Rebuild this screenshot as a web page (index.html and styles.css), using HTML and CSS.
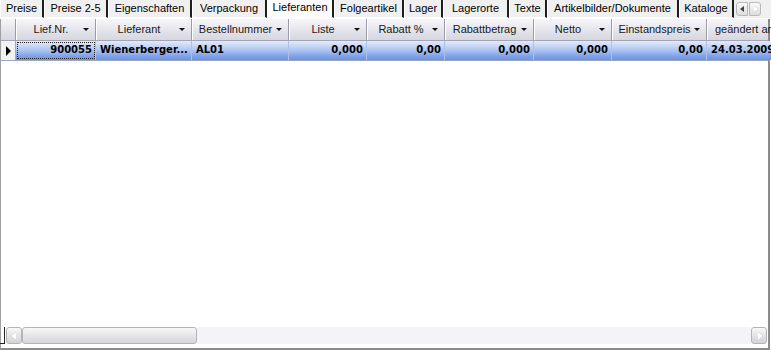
FILE: index.html
```html
<!DOCTYPE HTML>
<html lang=de>
  <head>
    <title>Artikel - Lieferanten</title>
    <meta name=viewport content=width=device-width,initial-scale=1>
    <link rel="stylesheet" href="styles.css">
  </head>
  <body>
    <div class=window>
      <div class=tabs>
        <div class=tab>Preise</div>
        <div class=tab>Preise 2-5</div>
        <div class=tab>Eigenschaften</div>
        <div class=tab>Verpackung</div>
        <div class="tab active">Lieferanten</div>
        <div class=tab>Folgeartikel</div>
        <div class=tab>Lager</div>
        <div class=tab>Lagerorte</div>
        <div class=tab>Texte</div>
        <div class=tab>Artikelbilder/Dokumente</div>
        <div class=tab>Kataloge</div>
        <div class=tabScroll>
          <span class="btn left"></span>
          <span class="btn right"></span>
        </div>
      </div>

      <div class=grid>
        <div class="cols head">
          <div class=ind></div>
          <div class=hcell>Lief.Nr.</div>
          <div class=hcell>Lieferant</div>
          <div class=hcell>Bestellnummer</div>
          <div class=hcell>Liste</div>
          <div class=hcell>Rabatt %</div>
          <div class=hcell>Rabattbetrag</div>
          <div class=hcell>Netto</div>
          <div class=hcell>Einstandspreis</div>
          <div class=hcell>geändert am</div>
        </div>
        <div class="cols row selected">
          <div class=ind><span class=pointer></span></div>
          <div class="cell num focus">900055</div>
          <div class=cell>Wienerberger...</div>
          <div class=cell>AL01</div>
          <div class="cell num">0,000</div>
          <div class="cell num">0,00</div>
          <div class="cell num">0,000</div>
          <div class="cell num">0,000</div>
          <div class="cell num">0,00</div>
          <div class=cell>24.03.2009</div>
        </div>
        <div class=empty></div>
        <div class=hscroll>
          <span class=corner></span>
          <span class="sbtn left"></span>
          <span class=thumb></span>
          <span class=track></span>
          <span class="sbtn right"></span>
        </div>
      </div>
    </div>
  </body>
</html>
```

FILE: styles.css
```css
html, body {
  margin: 0;
  background: #fff;
}
.window {
  width: 771px;
  height: 351px;
  overflow: hidden;
  font-family: "Liberation Sans", Arial, sans-serif;
  font-size: 11px;
  color: #000;
  display: flex;
  flex-direction: column;
}

/* tabs */
.tabs {
  display: flex;
  height: 18px;
  flex: none;
  background: #f0f0f0;
}
.tab {
  box-sizing: border-box;
  height: 18px;
  line-height: 16px;
  text-align: center;
  white-space: nowrap;
  background: #f0f0f0;
  border-left: 1px solid #fff;
  border-right: 2px solid #1e1e1e;
  border-bottom: 1px solid #fff;
  flex: none;
}
.tab:nth-child(1) { width: 44px; }
.tab:nth-child(2) { width: 64px; }
.tab:nth-child(3) { width: 84px; }
.tab:nth-child(4) { width: 75px; }
.tab:nth-child(5) { width: 67px; }
.tab:nth-child(6) { width: 70px; }
.tab:nth-child(7) { width: 39px; }
.tab:nth-child(8) { width: 66px; }
.tab:nth-child(9) { width: 38px; }
.tab:nth-child(10) { width: 132px; }
.tab:nth-child(11) { width: 55px; }
.tab.active {
  background: #fcfcfc;
  border-bottom-color: #fcfcfc;
  line-height: 14px;
}
.tabScroll {
  display: flex;
  gap: 1px;
  padding: 2px 0 0 2px;
}
.btn {
  box-sizing: border-box;
  width: 12px;
  height: 14px;
  border: 1px solid #b8b8b8;
  background: linear-gradient(#fafafa, #dcdcdc);
  position: relative;
}
.btn.left { border-radius: 3px 0 0 3px; }
.btn.right { border-radius: 0 3px 3px 0; }
.btn::after {
  content: "";
  position: absolute;
  top: 3px;
  border-top: 3px solid transparent;
  border-bottom: 3px solid transparent;
}
.btn.left::after {
  left: 3px;
  border-right: 4px solid #404040;
}
.btn.right::after {
  left: 4px;
  border-left: 4px solid #fff;
  filter: drop-shadow(0 0 0.5px #999);
}

/* grid */
.grid {
  flex: 1;
  display: flex;
  flex-direction: column;
  border-left: 1px solid #a0a0a0;
  border-right: 2px solid #8c8c8c;
  border-bottom: 2px solid #8c8c8c;
  margin-bottom: 1px;
  margin-top: 1px;
  width: 770px;
  box-sizing: border-box;
}
.cols {
  display: grid;
  grid-template-columns: 15px 80px 96px 97px 78px 78px 89px 78px 95px 90px;
  flex: none;
}
.head {
  height: 21px;
  background: linear-gradient(#f6f6fa, #e2e2ea 60%, #d6d6e0);
  border-bottom: 1px solid #a4a4b4;
}
.head .ind {
  border-right: 1px solid #9a9aa8;
}
.hcell {
  position: relative;
  line-height: 20px;
  text-align: center;
  padding-right: 10px;
  white-space: nowrap;
  overflow: hidden;
  color: #1a1a1a;
  border-left: 1px solid #fff;
  border-right: 1px solid #9a9aa8;
}
.hcell::after {
  content: "";
  position: absolute;
  right: 6px;
  top: 9px;
  border-left: 3px solid transparent;
  border-right: 3px solid transparent;
  border-top: 3px solid #111;
}
.hcell:last-child::after {
  display: none;
}
.hcell:last-child {
  text-align: left;
  padding-left: 7px;
}

.row {
  height: 19px;
  border-bottom: 1px solid #9aa6c4;
}
.row .ind {
  background: #f2f2f2;
  border-right: 1px solid #a8a8b0;
  position: relative;
}
.pointer {
  position: absolute;
  left: 5px;
  top: 5px;
  border-top: 5px solid transparent;
  border-bottom: 5px solid transparent;
  border-left: 5px solid #000;
}
.selected .cell {
  background: linear-gradient(#e2ebfc, #b2c8f2 45%, #7fa2e8 80%, #6c92e2);
}
.cell {
  font-family: "DejaVu Sans", Verdana, sans-serif;
  font-size: 10px;
  font-weight: bold;
  line-height: 18px;
  padding: 0 3px 0 4px;
  white-space: nowrap;
  overflow: hidden;
  border-right: 1px solid #b0c0e4;
}
.cell.num {
  text-align: right;
}
.cell.focus {
  outline: 1px dotted #222;
  outline-offset: -2px;
}
.empty {
  flex: 1;
}

/* horizontal scrollbar */
.hscroll {
  display: flex;
  height: 17px;
  flex: none;
  margin-bottom: 4px;
  align-items: stretch;
}
.corner {
  width: 4px;
  border-right: 1px solid #222;
  border-bottom: 1px solid #222;
  margin-left: -1px;
}
.sbtn {
  box-sizing: border-box;
  width: 16px;
  border: 1px solid #b4b4b8;
  border-radius: 3px;
  background: linear-gradient(#f8f8f8, #e4e4e6 50%, #d4d4d8);
  position: relative;
  flex: none;
}
.sbtn.left { margin-left: 1px; }
.sbtn::after {
  content: "";
  position: absolute;
  top: 4px;
  border-top: 4px solid transparent;
  border-bottom: 4px solid transparent;
}
.sbtn.left::after {
  left: 4px;
  border-right: 5px solid #fff;
  filter: drop-shadow(0 0 0.6px #888);
}
.sbtn.right::after {
  left: 6px;
  border-left: 5px solid #fff;
  filter: drop-shadow(0 0 0.6px #888);
}
.thumb {
  box-sizing: border-box;
  width: 175px;
  border: 1px solid #b4b4b8;
  border-radius: 3px;
  background: linear-gradient(#f8f8f8, #e6e6e8 50%, #d6d6da);
}
.track {
  flex: 1;
  background: #f4f4f8;
}
.sbtn.right {
  margin-right: 1px;
}
```
